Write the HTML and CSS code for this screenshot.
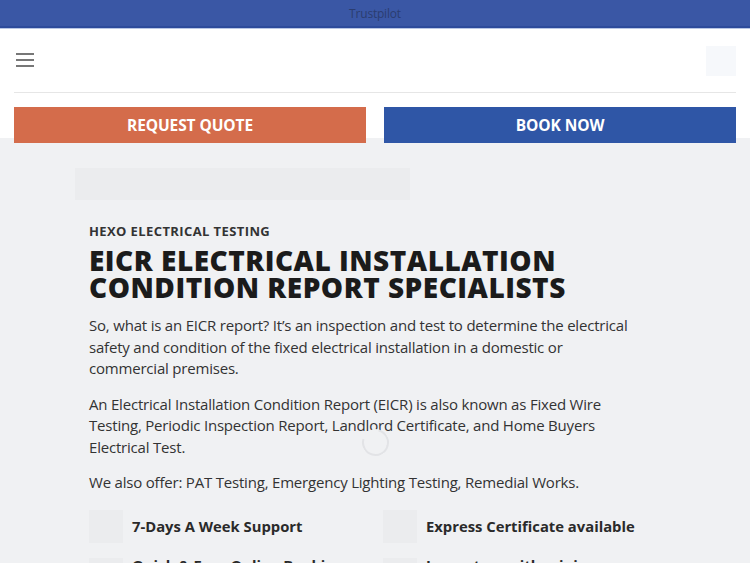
FILE: index.html
```html
<!DOCTYPE html>
<html lang="en">
<head>
<meta charset="utf-8">
<title>EICR Electrical Installation Condition Report Specialists</title>
<link rel="stylesheet" href="styles.css">
</head>
<body>
<div class="topbar"><span class="trust">Trustpilot</span></div>
<header class="header">
  <div class="nav">
    <button class="burger" aria-label="Menu"><span></span><span></span><span></span></button>
    <div class="logo-box"></div>
  </div>
  <div class="cta-row">
    <a class="cta cta-quote" href="#">REQUEST QUOTE</a>
    <a class="cta cta-book" href="#">BOOK NOW</a>
  </div>
</header>
<main class="main">
  <div class="placeholder"></div>
  <section class="content">
    <p class="eyebrow">HEXO ELECTRICAL TESTING</p>
    <h1 class="title">EICR ELECTRICAL INSTALLATION CONDITION REPORT SPECIALISTS</h1>
    <p class="text">So, what is an EICR report? It’s an inspection and test to determine the electrical safety and condition of the fixed electrical installation in a domestic or commercial premises.</p>
    <p class="text">An Electrical Installation Condition Report (EICR) is also known as Fixed Wire Testing, Periodic Inspection Report, Landlord Certificate, and Home Buyers Electrical Test.</p>
    <p class="text">We also offer: PAT Testing, Emergency Lighting Testing, Remedial Works.</p>
    <ul class="features">
      <li class="feature"><span class="ficon"></span><span class="flabel">7-Days A Week Support</span></li>
      <li class="feature"><span class="ficon"></span><span class="flabel">Express Certificate available</span></li>
      <li class="feature feature-top"><span class="ficon"></span><span class="flabel">Quick &amp; Easy Online Booking</span></li>
      <li class="feature feature-top"><span class="ficon"></span><span class="flabel flabel-narrow">Inspectors with minimum 15 years experience</span></li>
    </ul>
  </section>
  <div class="spinner"></div>
</main>
</body>
</html>
```

FILE: styles.css
```css
* { box-sizing: border-box; }
html, body { margin: 0; padding: 0; }
body {
  font-family: "Open Sans", "Liberation Sans", sans-serif;
  background: #f0f1f3;
  color: #333;
  overflow: hidden;
  height: 563px;
}
.topbar {
  height: 28px;
  background: #3a57a5;
  border-bottom: 2px solid #2d4b9b;
  display: flex;
  align-items: center;
  justify-content: center;
  box-shadow: 0 1px 0 #b9c6e4;
}
.trust {
  font-size: 12px;
  color: #2b3d70;
  letter-spacing: -0.2px;
}
.header {
  background: #fff;
  height: 109px;
  padding: 0 14px;
  margin-top: 1px;
}
.nav {
  height: 64px;
  display: flex;
  align-items: center;
  justify-content: space-between;
  border-bottom: 1px solid #e6e6e6;
}
.burger {
  border: 0;
  background: none;
  padding: 0;
  margin: 0 0 2px 2px;
  width: 18px;
  display: flex;
  flex-direction: column;
  gap: 4px;
  cursor: pointer;
}
.burger span {
  display: block;
  height: 2px;
  background: #777;
}
.logo-box {
  width: 30px;
  height: 30px;
  background: #f6f8fb;
}
.cta-row {
  display: flex;
  gap: 18px;
  margin-top: 14px;
}
.cta {
  flex: 1;
  height: 36px;
  display: flex;
  align-items: center;
  justify-content: center;
  color: #fff;
  text-decoration: none;
  font-family: "Open Sans", sans-serif;
  font-weight: 700;
  font-size: 15.5px;
  letter-spacing: -0.1px;
}
.cta-quote { background: #d46c4b; }
.cta-book { background: #2f56a6; }
.main {
  position: relative;
  padding: 30px 0 0 75px;
}
.placeholder {
  width: 335px;
  height: 32px;
  background: #ebecee;
}
.content {
  padding: 0 0 0 14px;
  width: 569px;
}
.eyebrow {
  margin: 21px 0 0;
  font-size: 13px;
  font-weight: 700;
  letter-spacing: 0.4px;
  color: #333;
  line-height: 20px;
}
.title {
  margin: 6px 0 0;
  font-size: 28px;
  line-height: 27px;
  font-weight: 800;
  letter-spacing: 0.5px;
  color: #1b1b1b;
}
.text {
  margin: 14px 0 0;
  font-size: 15px;
  line-height: 21.5px;
  letter-spacing: -0.2px;
  color: #333;
}
.features {
  list-style: none;
  margin: 16px 0 0;
  padding: 0;
  display: grid;
  grid-template-columns: 294px 1fr;
  row-gap: 15px;
  width: 600px;
}
.feature {
  display: flex;
  align-items: center;
  gap: 9px;
}
.feature-top {
  align-items: flex-start;
}
.feature-top .flabel {
  margin-top: -3px;
}
.ficon {
  width: 34px;
  height: 33px;
  background: #ebecee;
  flex: none;
}
.flabel {
  font-weight: 700;
  font-size: 14.8px;
  color: #2a2a2a;
}
.flabel-narrow {
  max-width: 210px;
}
.spinner {
  position: absolute;
  left: 362px;
  top: 291px;
  width: 27px;
  height: 27px;
  border-radius: 50%;
  border: 2px solid #e2e3e6;
  border-top-color: #f0f1f3;
  transform: rotate(-30deg);
}
```
